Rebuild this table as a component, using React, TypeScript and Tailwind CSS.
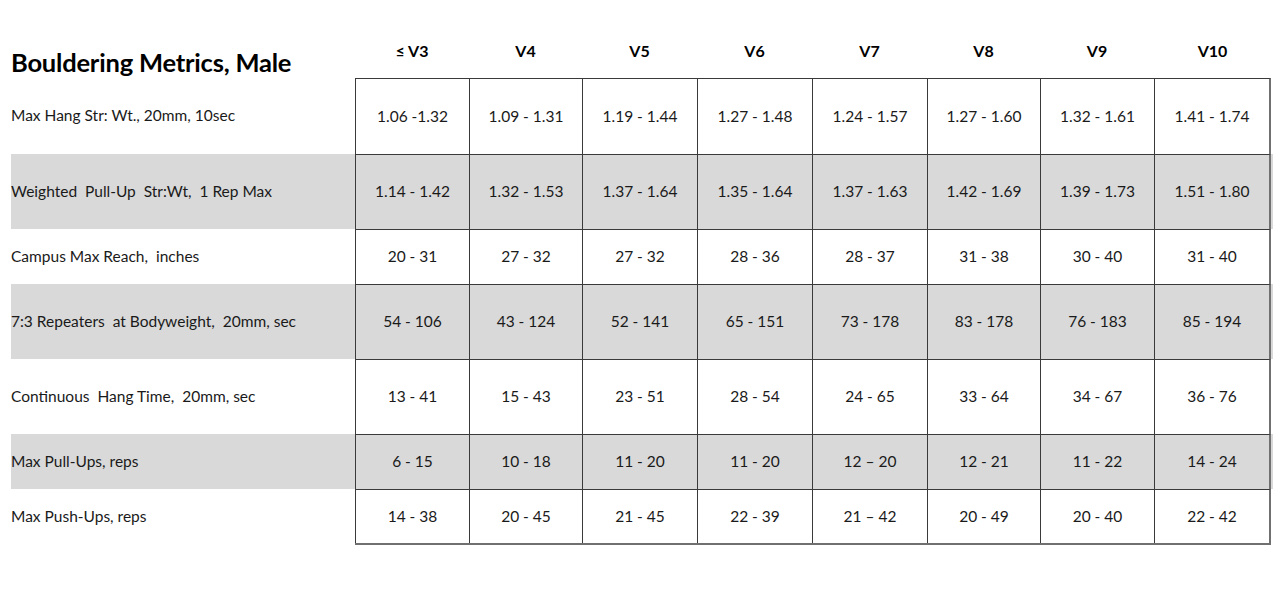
import React from "react";

const grades = ["≤ V3", "V4", "V5", "V6", "V7", "V8", "V9", "V10"];
const widths = ["w-[114px]", "w-[113px]", "w-[115px]", "w-[115px]", "w-[115px]", "w-[113px]", "w-[114px]", "w-[117px]"];

const rows: { label: string; h: string; gray: boolean; vals: string[] }[] = [
  { label: "Max Hang Str: Wt., 20mm, 10sec", h: "h-[76px]", gray: false, vals: ["1.06 -1.32", "1.09 - 1.31", "1.19 - 1.44", "1.27 - 1.48", "1.24 - 1.57", "1.27 - 1.60", "1.32 - 1.61", "1.41 - 1.74"] },
  { label: "Weighted  Pull-Up  Str:Wt,  1 Rep Max", h: "h-[75px]", gray: true, vals: ["1.14 - 1.42", "1.32 - 1.53", "1.37 - 1.64", "1.35 - 1.64", "1.37 - 1.63", "1.42 - 1.69", "1.39 - 1.73", "1.51 - 1.80"] },
  { label: "Campus Max Reach,  inches", h: "h-[55px]", gray: false, vals: ["20 - 31", "27 - 32", "27 - 32", "28 - 36", "28 - 37", "31 - 38", "30 - 40", "31 - 40"] },
  { label: "7:3 Repeaters  at Bodyweight,  20mm, sec", h: "h-[75px]", gray: true, vals: ["54 - 106", "43 - 124", "52 - 141", "65 - 151", "73 - 178", "83 - 178", "76 - 183", "85 - 194"] },
  { label: "Continuous  Hang Time,  20mm, sec", h: "h-[75px]", gray: false, vals: ["13 - 41", "15 - 43", "23 - 51", "28 - 54", "24 - 65", "33 - 64", "34 - 67", "36 - 76"] },
  { label: "Max Pull-Ups, reps", h: "h-[55px]", gray: true, vals: ["6 - 15", "10 - 18", "11 - 20", "11 - 20", "12 – 20", "12 - 21", "11 - 22", "14 - 24"] },
  { label: "Max Push-Ups, reps", h: "h-[56px]", gray: false, vals: ["14 - 38", "20 - 45", "21 - 45", "22 - 39", "21 – 42", "20 - 49", "20 - 40", "22 - 42"] },
];

export default function App() {
  return (
    <div className="w-[1280px] h-[594px] bg-white text-[#1a1a1a] overflow-hidden" style={{ fontFamily: "Lato, 'Open Sans', sans-serif" }}>
      <div className="ml-[11px] w-[1262px]">
        {/* header */}
        <div className="flex h-[78px]">
          <div className="w-[344px] pt-[47px] text-[25.5px] font-bold leading-[31px] text-black tracking-[-0.2px]">
            Bouldering Metrics, Male
          </div>
          <div className="flex">
            {grades.map((g, j) => (
              <div key={g} className={`${widths[j]} pt-[40px] text-center text-[16px] font-bold leading-[22px] text-black`}>
                {g}
              </div>
            ))}
          </div>
        </div>
        {/* body */}
        <div className="flex flex-col">
          {rows.map((r, i) => (
            <div key={i} className={`flex ${r.h} ${r.gray ? "bg-[#d9d9d9]" : "bg-white"}`}>
              <div className="w-[344px] flex items-center text-[15.5px] whitespace-pre">{r.label}</div>
              <div className={`flex ${i === rows.length - 1 ? "border-b-2 border-b-[#707070]" : ""}`}>
                {r.vals.map((v, j) => (
                  <div
                    key={j}
                    className={`${widths[j]} flex items-center justify-center text-[15.5px] border-l border-t border-[#3a3a3a] ${j === 7 ? "border-r-2 border-r-[#707070]" : ""}`}
                  >
                    {v}
                  </div>
                ))}
              </div>
            </div>
          ))}
        </div>
      </div>
    </div>
  );
}
